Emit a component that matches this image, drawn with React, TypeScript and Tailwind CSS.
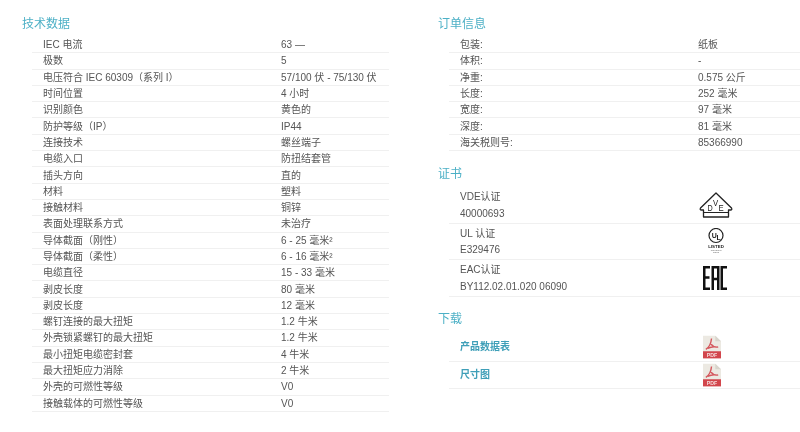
const tech: [string, React.ReactNode][] = [
  ["IEC 电流", "63 —"],
  ["极数", "5"],
  ["电压符合 IEC 60309（系列 I）", "57/100 伏 - 75/130 伏"],
  ["时间位置", "4 小时"],
  ["识别颜色", "黄色的"],
  ["防护等级（IP）", "IP44"],
  ["连接技术", "螺丝端子"],
  ["电缆入口", "防扭结套管"],
  ["插头方向", "直的"],
  ["材料", "塑料"],
  ["接触材料", "铜锌"],
  ["表面处理联系方式", "未治疗"],
  ["导体截面（刚性）", "6 - 25 毫米²"],
  ["导体截面（柔性）", "6 - 16 毫米²"],
  ["电缆直径", "15 - 33 毫米"],
  ["剥皮长度", "80 毫米"],
  ["剥皮长度", "12 毫米"],
  ["螺钉连接的最大扭矩", "1.2 牛米"],
  ["外壳锁紧螺钉的最大扭矩", "1.2 牛米"],
  ["最小扭矩电缆密封套", "4 牛米"],
  ["最大扭矩应力消除", "2 牛米"],
  ["外壳的可燃性等级", "V0"],
  ["接触载体的可燃性等级", "V0"],
];
const order: [string, string][] = [
  ["包装:", "纸板"],
  ["体积:", "-"],
  ["净重:", "0.575 公斤"],
  ["长度:", "252 毫米"],
  ["宽度:", "97 毫米"],
  ["深度:", "81 毫米"],
  ["海关税则号:", "85366990"],
];

function Heading({ children, cls }: { children: React.ReactNode; cls: string }) {
  return <h2 className={`flex items-center text-[12px] font-normal text-[#4cb0c6] ${cls}`}>{children}</h2>;
}

function Row({ a, b }: { a: string; b: React.ReactNode }) {
  return (
    <div className="flex h-[16.3px] items-center border-b border-[#f0f0f0] pl-[11px] pt-[1px] text-[10px] leading-none text-[#555555]">
      <span className="w-[238px] shrink-0 whitespace-nowrap">{a}</span>
      <span className="whitespace-nowrap">{b}</span>
    </div>
  );
}

function Vde() {
  const f = "'Liberation Sans', sans-serif";
  return (
    <svg className="shrink-0" width="34" height="26" viewBox="0 0 34 26" fill="none" stroke="#222" strokeWidth="1.3">
      <path d="M17 1 L32.5 16 Q33.5 18 31.5 18 L29.5 18 L29.5 25 L4.5 25 L4.5 18 L2.5 18 Q0.5 18 1.5 16 Z" strokeLinejoin="round" />
      <path d="M4.5 20.5 H29.5" strokeWidth="1" fill="none" />
      <text x="8.5" y="19" fontSize="9.5" textLength="5.2" lengthAdjust="spacingAndGlyphs" fill="#222" stroke="none" fontFamily={f}>D</text>
      <text x="14" y="14" fontSize="9.5" textLength="5.2" lengthAdjust="spacingAndGlyphs" fill="#222" stroke="none" fontFamily={f}>V</text>
      <text x="19.5" y="19" fontSize="9.5" textLength="5.2" lengthAdjust="spacingAndGlyphs" fill="#222" stroke="none" fontFamily={f}>E</text>
    </svg>
  );
}

function Ul() {
  const f = "'Liberation Sans', sans-serif";
  return (
    <svg className="shrink-0" width="16" height="26" viewBox="0 0 16 26" fill="none">
      <circle cx="8" cy="7.5" r="7" stroke="#222" strokeWidth="1.2" />
      <text x="3.8" y="9.5" fontSize="7" fontWeight="700" fill="#222" fontFamily={f}>U</text>
      <text x="8.4" y="11.5" fontSize="7" fontWeight="700" fill="#222" fontFamily={f}>L</text>
      <text x="8" y="19.5" textAnchor="middle" fontSize="4.4" fontWeight="700" fill="#222" fontFamily={f}>LISTED</text>
      <text x="8" y="22.5" textAnchor="middle" fontSize="2.5" fill="#666" fontFamily={f}>Threaded</text>
      <text x="8" y="25" textAnchor="middle" fontSize="2.5" fill="#666" fontFamily={f}>1E12</text>
    </svg>
  );
}

function Eac() {
  return (
    <svg className="shrink-0" width="24" height="24" viewBox="0 0 24 24" fill="none" stroke="#111" strokeWidth="2.5">
      <path d="M7 1.25 H1.25 V22.75 H7 M1.25 11.5 H6.5" />
      <path d="M9.75 24 V1.25 H15.25 V24 M9.75 13 H15.25" />
      <path d="M24 1.25 H18.75 V22.75 H24" />
    </svg>
  );
}

function Pdf() {
  return (
    <svg width="18" height="24" viewBox="0 0 19 24">
      <path d="M0 0 H13 L19 6 V24 H0 Z" fill="#ece9e2" />
      <path d="M13 0 V6 H19 Z" fill="#d8d5cc" />
      <path d="M9 3 C8.5 8 7 12 3 14.5 M8.5 9 C10 11 13 12.5 16 12 M5 13.5 C8 12 11 11.5 14 12" fill="none" stroke="#d4575d" strokeWidth="1.5" />
      <rect x="0" y="16.5" width="19" height="7.5" fill="#d2464c" />
      <text x="9.5" y="22.5" textAnchor="middle" fontSize="5.5" fontWeight="700" fill="#f6dcdc" fontFamily="'Liberation Sans', sans-serif">PDF</text>
    </svg>
  );
}

function Cert({ a, b, logo, indent }: { a: string; b: string; logo: React.ReactNode; indent: string }) {
  return (
    <div className="flex h-[36.5px] items-center border-b border-[#f0f0f0] pl-[11px] text-[10px] text-[#555555]">
      <div className="flex w-[239px] shrink-0 flex-col gap-[6px] pt-[2px] leading-[10.5px]">
        <span>{a}</span>
        <span>{b}</span>
      </div>
      <div className={`flex ${indent}`}>{logo}</div>
    </div>
  );
}

function Download({ a, h }: { a: string; h: string }) {
  return (
    <div className={`flex items-center border-b border-[#f0f0f0] pl-[11px] text-[10px] font-bold text-[#3f9fb8] ${h}`}>
      <span className="w-[243px] shrink-0">{a}</span>
      <Pdf />
    </div>
  );
}

export default function App() {
  return (
    <div
      className="flex h-[432px] w-[800px] overflow-hidden bg-white pl-[22px] blur-[0.3px]"
      style={{ fontFamily: "'Liberation Sans', 'Noto Sans CJK SC', sans-serif" }}
    >
      <div className="w-[367px] shrink-0">
        <Heading cls="h-[37px] pt-[11px]">技术数据</Heading>
        <div className="ml-[10px]">
          {tech.map(([a, b], i) => (
            <Row key={i} a={a} b={b} />
          ))}
        </div>
      </div>
      <div className="ml-[49px] flex-1">
        <Heading cls="h-[37px] pt-[11px]">订单信息</Heading>
        <div className="ml-[11px]">
          {order.map(([a, b], i) => (
            <Row key={i} a={a} b={b} />
          ))}
        </div>
        <Heading cls="h-[36px] pt-[9px]">证书</Heading>
        <div className="ml-[11px]">
          <Cert a="VDE认证" b="40000693" logo={<Vde />} indent="" />
          <Cert a="UL 认证" b="E329476" logo={<Ul />} indent="ml-[9px]" />
          <Cert a="EAC认证" b="BY112.02.01.020 06090" logo={<Eac />} indent="ml-[4px]" />
        </div>
        <Heading cls="h-[36px] pt-[9px]">下载</Heading>
        <div className="ml-[11px]">
          <Download a="产品数据表" h="h-[29px]" />
          <Download a="尺寸图" h="h-[27.5px]" />
        </div>
      </div>
    </div>
  );
}
